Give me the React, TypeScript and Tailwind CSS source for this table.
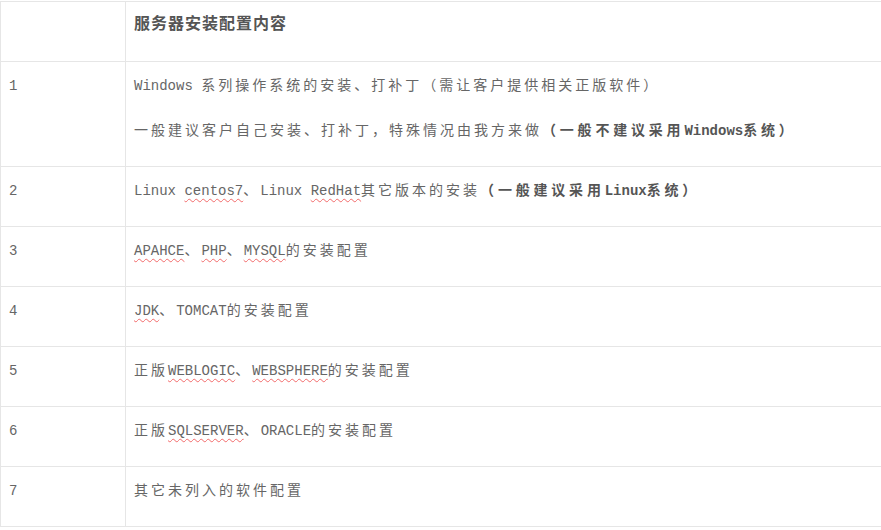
import type { ReactNode } from 'react';

// latin runs: half-width mono like the original page
function L({ children }: { children: ReactNode }) {
  return <span className="font-['Liberation_Mono',monospace] tracking-normal">{children}</span>;
}

// spell-check squiggle
function S({ children }: { children: ReactNode }) {
  return (
    <span className="font-['Liberation_Mono',monospace] tracking-normal underline decoration-wavy decoration-1 decoration-[#f26b6b] underline-offset-[3px]">
      {children}
    </span>
  );
}

function B({ children }: { children: ReactNode }) {
  return <span className="font-bold tracking-[3.8px] text-[#555]">{children}</span>;
}

interface RowProps {
  no?: string;
  header?: boolean;
  children: ReactNode;
}

function Row({ no, header, children }: RowProps) {
  return (
    <>
      <div className="border-r border-b border-[#e6e6e6] pl-2 pt-[9px] pb-[5px]">
        <p className="mb-[19px] leading-[26px] h-[26px]">
          {no && <L>{no}</L>}
        </p>
      </div>
      <div
        className={`border-b border-[#e6e6e6] pl-2 ${
          header ? 'pt-[7px] pb-[7px] text-[16px] font-bold tracking-[1px] text-[#555]' : 'pt-[9px] pb-[5px]'
        }`}
      >
        {children}
      </div>
    </>
  );
}

function P({ children }: { children: ReactNode }) {
  return <p className="mb-[19px] h-[26px] leading-[26px] whitespace-pre">{children}</p>;
}

export default function App() {
  return (
    <div className="w-[881px] h-[530px] bg-white overflow-hidden font-['Noto_Sans_CJK_SC',sans-serif] text-[14px] tracking-[3px] text-[#666]">
      <div className="mt-px grid grid-cols-[125px_1fr] border-t border-l border-[#e6e6e6]">
        <Row header>
          <P>服务器安装配置内容</P>
        </Row>

        <Row no="1">
          <P>
            <L>Windows </L>系列操作系统的安装、打补丁（需让客户提供相关正版软件）
          </P>
          <P>
            一般建议客户自己安装、打补丁，特殊情况由我方来做
            <B>（一般不建议采用<L>Windows</L>系统）</B>
          </P>
        </Row>

        <Row no="2">
          <P>
            <L>Linux </L><S>centos7</S>、<L>Linux </L><S>RedHat</S>其它版本的安装
            <B>（一般建议采用<L>Linux</L>系统）</B>
          </P>
        </Row>

        <Row no="3">
          <P>
            <S>APAHCE</S>、<S>PHP</S>、<S>MYSQL</S>的安装配置
          </P>
        </Row>

        <Row no="4">
          <P>
            <S>JDK</S>、<L>TOMCAT</L>的安装配置
          </P>
        </Row>

        <Row no="5">
          <P>
            正版<S>WEBLOGIC</S>、<S>WEBSPHERE</S>的安装配置
          </P>
        </Row>

        <Row no="6">
          <P>
            正版<S>SQLSERVER</S>、<L>ORACLE</L>的安装配置
          </P>
        </Row>

        <Row no="7">
          <P>其它未列入的软件配置</P>
        </Row>
      </div>
    </div>
  );
}
